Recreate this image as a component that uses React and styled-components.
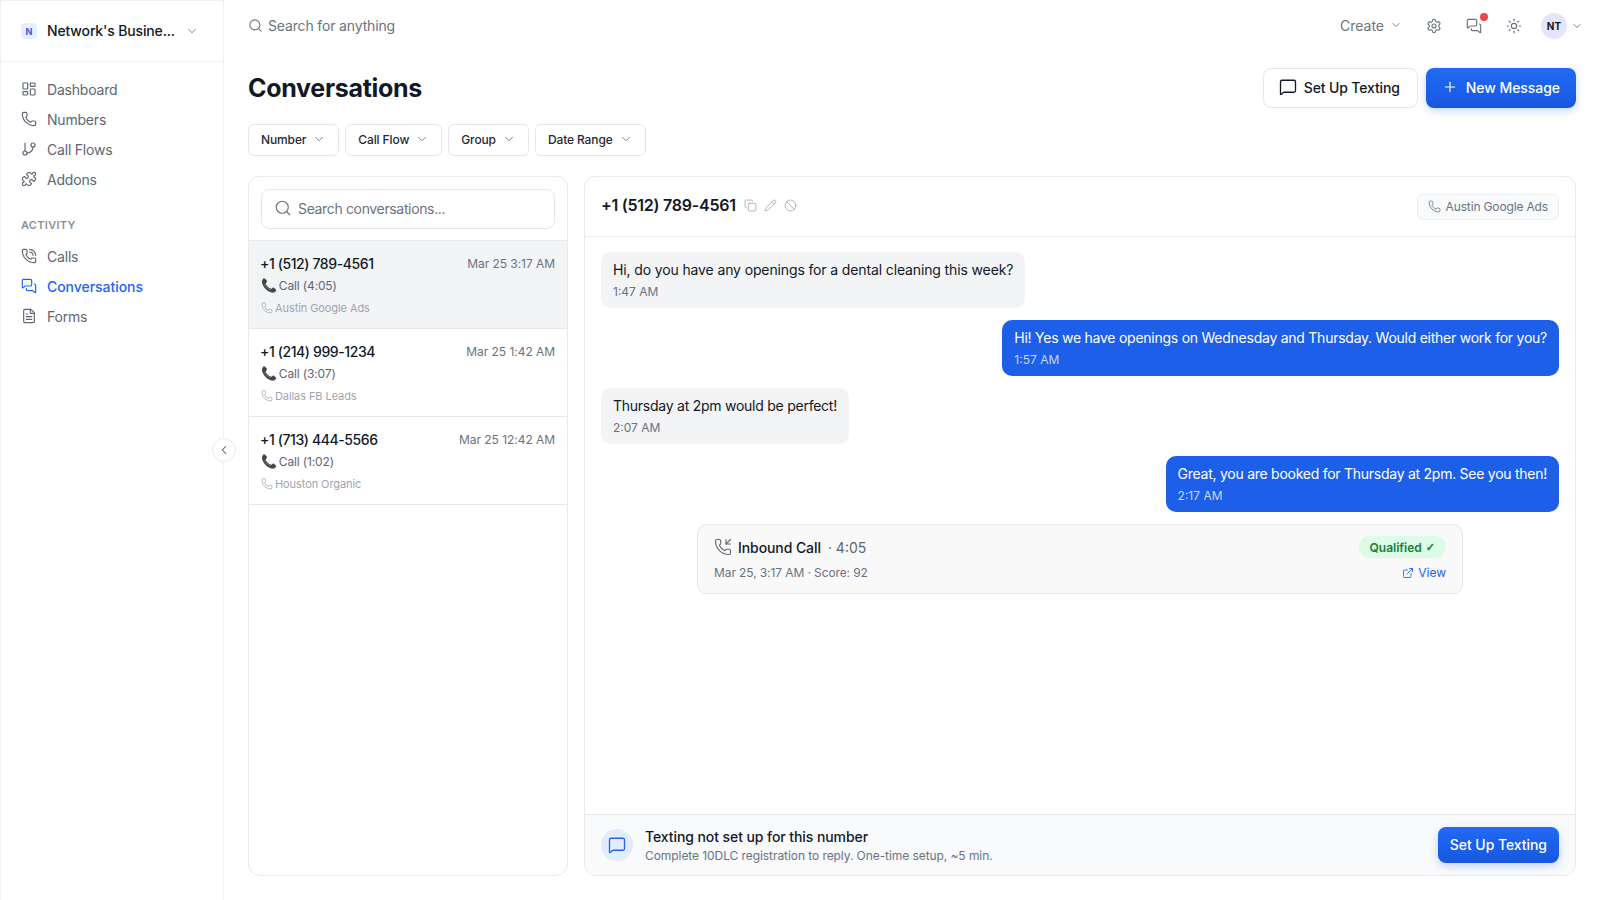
import React from "react";
import styled, { createGlobalStyle } from "styled-components";
import {
  LayoutDashboard,
  Phone,
  GitBranch,
  Puzzle,
  PhoneCall,
  MessagesSquare,
  FileText,
  ChevronDown,
  ChevronLeft,
  Search,
  Settings,
  Sun,
  MessageSquare,
  Plus,
  Copy,
  Pencil,
  Ban,
  PhoneIncoming,
  ExternalLink,
} from "lucide-react";

const GlobalStyle = createGlobalStyle`
  * { box-sizing: border-box; }
  html, body { margin: 0; padding: 0; height: 100%; background: #fff; }
  body {
    font-family: Inter, "Noto Sans", "Liberation Sans", sans-serif;
    color: #111827;
  }
`;

const Shell = styled.div`
  display: flex;
  height: 900px;
  overflow: hidden;
`;

const Sidebar = styled.aside`
  position: relative;
  width: 224px;
  flex: none;
  border: 1px solid #f1f2f4;
  border-bottom: none;
`;

const BusinessRow = styled.div`
  height: 61px;
  display: flex;
  align-items: center;
  padding: 0 20px;
  border-bottom: 1px solid #f1f2f4;
  color: #6b7280;
`;

const BusinessBadge = styled.div`
  width: 16px;
  height: 16px;
  border-radius: 4px;
  background: #e6efff;
  color: #2563eb;
  font-size: 9px;
  font-weight: 700;
  display: flex;
  align-items: center;
  justify-content: center;
  margin-right: 10px;
`;

const BusinessName = styled.div`
  width: 128px;
  padding-bottom: 1px;
  font-size: 14px;
  font-weight: 500;
  letter-spacing: -0.15px;
  color: #111827;
  white-space: nowrap;
`;

const Nav = styled.nav`
  padding: 12px 20px 0;
  display: flex;
  flex-direction: column;
`;

const NavItem = styled.div`
  height: 30px;
  display: flex;
  align-items: center;
  gap: 10px;
  font-size: 14px;
  letter-spacing: ${(props) => (props.active ? "-0.05px" : "-0.2px")};
  color: ${(props) => (props.active ? "#1d64f2" : "#5f6672")};
  font-weight: ${(props) => (props.active ? 500 : 400)};
`;

const NavHeading = styled.div`
  margin-top: 15px;
  height: 32px;
  display: flex;
  align-items: center;
  font-size: 11px;
  font-weight: 600;
  letter-spacing: 0.3px;
  color: #8a909b;
`;

const CollapseButton = styled.button`
  position: absolute;
  top: 437px;
  right: -13px;
  width: 24px;
  height: 24px;
  padding: 0;
  border-radius: 50%;
  border: 1px solid #e9eaee;
  background: #fff;
  color: #4b5563;
  display: flex;
  align-items: center;
  justify-content: center;
`;

const Main = styled.main`
  flex: 1;
  min-width: 0;
  padding: 0 24px 24px;
  display: flex;
  flex-direction: column;
`;

const Topbar = styled.header`
  height: 52px;
  margin-right: -7px;
  display: flex;
  align-items: center;
  color: #6b7280;
`;

const TopSearch = styled.div`
  flex: 1;
  display: flex;
  align-items: center;
  gap: 5px;
  padding-bottom: 2px;
  font-size: 14px;
  letter-spacing: -0.15px;
`;

const TopActions = styled.div`
  display: flex;
  align-items: center;
`;

const CreateMenu = styled.div`
  display: flex;
  align-items: center;
  gap: 6px;
  padding-bottom: 2px;
  font-size: 14px;
  margin-right: 24px;
`;

const IconSlot = styled.div`
  position: relative;
  display: flex;
  margin-right: 24px;
`;

const Dot = styled.span`
  position: absolute;
  top: -5px;
  right: -6px;
  width: 8px;
  height: 8px;
  border-radius: 50%;
  background: #ef4444;
`;

const Avatar = styled.div`
  width: 26px;
  height: 26px;
  border-radius: 50%;
  background: #e6e4f8;
  color: #111827;
  font-size: 10px;
  font-weight: 700;
  display: flex;
  align-items: center;
  justify-content: center;
  margin-right: 4px;
  margin-left: -5px;
`;

const TitleRow = styled.div`
  height: 40px;
  margin-top: 16px;
  display: flex;
  align-items: center;
  justify-content: space-between;
`;

const Title = styled.h1`
  margin: 0;
  font-size: 25px;
  font-weight: 700;
  letter-spacing: -0.3px;
  color: #111827;
`;

const TitleActions = styled.div`
  display: flex;
  gap: 8px;
`;

const OutlineButton = styled.button`
  height: 40px;
  padding: 0 17px 2px 15px;
  display: flex;
  align-items: center;
  gap: 7px;
  border: 1px solid #e5e7eb;
  border-radius: 8px;
  background: #fff;
  color: #111827;
  font: 500 14px Inter, sans-serif;
  letter-spacing: -0.15px;
`;

const PrimaryButton = styled.button`
  height: ${(props) => props.height || 40}px;
  padding: 0 ${(props) => props.pad || 16}px 2px;
  display: flex;
  align-items: center;
  gap: 8px;
  border: none;
  border-radius: 8px;
  background: linear-gradient(180deg, #2269f5, #1657e0);
  box-shadow: 0 3px 8px rgba(29, 100, 242, 0.25);
  color: #fff;
  font: 500 14px Inter, sans-serif;
  letter-spacing: -0.05px;
`;

const Filters = styled.div`
  margin-top: 16px;
  display: flex;
  gap: 6px;
`;

const FilterButton = styled.button`
  height: 32px;
  padding: 0 12px 2px;
  display: flex;
  align-items: center;
  gap: 6px;
  border: 1px solid #e5e7eb;
  border-radius: 6px;
  background: #fff;
  color: #1f2937;
  font: 500 12px Inter, sans-serif;
  letter-spacing: -0.12px;
`;

const Panels = styled.div`
  flex: 1;
  min-height: 0;
  margin-top: 20px;
  display: flex;
  gap: 16px;
`;

const ListPanel = styled.section`
  width: 320px;
  flex: none;
  border: 1px solid #e9eaee;
  border-radius: 12px;
  overflow: hidden;
`;

const ListSearchWrap = styled.div`
  height: 64px;
  padding: 12px 12px;
  border-bottom: 1px solid #e9eaee;
`;

const ListSearch = styled.div`
  height: 40px;
  display: flex;
  align-items: center;
  gap: 6px;
  padding: 0 12px 2px;
  border: 1px solid #e5e7eb;
  border-radius: 8px;
  color: #6b7280;
  font-size: 14px;
  letter-spacing: -0.35px;
`;

const Row = styled.div`
  height: 88px;
  padding: 13px 12px 0;
  border-bottom: 1px solid #e5e7eb;
  background: ${(props) => (props.selected ? "#f3f4f6" : "#fff")};
`;

const RowTop = styled.div`
  display: flex;
  justify-content: space-between;
  align-items: center;
  height: 18px;
`;

const RowNumber = styled.div`
  margin-left: -1px;
  font-size: 14px;
  font-weight: 500;
  letter-spacing: -0.4px;
  color: #111827;
`;

const RowDate = styled.div`
  font-size: 12px;
  letter-spacing: -0.05px;
  color: #6b7280;
`;

const RowCall = styled.div`
  margin-top: 5px;
  height: 17px;
  display: flex;
  align-items: center;
  gap: 2px;
  font-size: 12px;
  letter-spacing: -0.15px;
  color: #5f6672;
`;

const CallGlyph = styled.span`
  color: #374151;
  font-size: 13px;
  line-height: 1;
`;

const RowSource = styled.div`
  margin-top: 6px;
  height: 16px;
  display: flex;
  align-items: center;
  gap: 2px;
  font-size: 11px;
  letter-spacing: -0.08px;
  color: #a0a5af;
`;

const ChatPanel = styled.section`
  flex: 1;
  min-width: 0;
  border: 1px solid #e9eaee;
  border-radius: 12px;
  overflow: hidden;
  display: flex;
  flex-direction: column;
`;

const ChatHeader = styled.div`
  height: 60px;
  flex: none;
  padding: 0 16px;
  display: flex;
  align-items: center;
  justify-content: space-between;
  border-bottom: 1px solid #e9eaee;
`;

const ChatHeading = styled.div`
  display: flex;
  align-items: center;
  gap: 7px;
  padding-bottom: 3px;
  color: #a0a5af;
`;

const ChatNumber = styled.div`
  font-size: 16px;
  font-weight: 600;
  letter-spacing: -0.25px;
  color: #111827;
  margin-right: 1px;
`;

const SourceTag = styled.div`
  height: 26px;
  padding: 0 10px;
  display: flex;
  align-items: center;
  gap: 5px;
  border: 1px solid #eceef1;
  border-radius: 6px;
  background: #f9fafb;
  color: #6b7280;
  font-size: 12px;
  letter-spacing: -0.15px;
`;

const Thread = styled.div`
  flex: 1;
  min-height: 0;
  padding: 15px 16px;
  display: flex;
  flex-direction: column;
  gap: 12px;
`;

const Bubble = styled.div`
  align-self: ${(props) => (props.mine ? "flex-end" : "flex-start")};
  height: 56px;
  padding: 8px 12px;
  border-radius: 10px;
  background: ${(props) => (props.mine ? "#1d5fe8" : "#f3f4f6")};
  color: ${(props) => (props.mine ? "#fff" : "#111827")};
  font-size: 14px;
  line-height: 20px;
  letter-spacing: ${(props) => props.tracking}px;
`;

const BubbleTime = styled.div`
  margin-top: 4px;
  font-size: 12px;
  line-height: 16px;
  letter-spacing: 0;
  color: ${(props) => (props.mine ? "#c7d8fb" : "#6b7280")};
`;

const CallCard = styled.div`
  align-self: center;
  width: 766px;
  height: 70px;
  padding: 11px 16px;
  border: 1px solid #e5e7eb;
  border-radius: 10px;
  background: #f9f9fa;
  display: flex;
  justify-content: space-between;
`;

const CallInfo = styled.div`
  display: flex;
  flex-direction: column;
  gap: 7px;
`;

const CallTitle = styled.div`
  height: 22px;
  display: flex;
  align-items: center;
  gap: 6px;
  color: #5f6672;
  font-size: 14px;
`;

const CallName = styled.span`
  color: #111827;
  font-weight: 500;
  letter-spacing: -0.08px;
  margin-right: 1px;
`;

const CallMeta = styled.div`
  font-size: 12px;
  letter-spacing: -0.1px;
  color: #6b7280;
`;

const CallSide = styled.div`
  display: flex;
  flex-direction: column;
  align-items: flex-end;
  gap: 7px;
`;

const QualifiedPill = styled.div`
  height: 22px;
  padding: 0 11px;
  display: flex;
  align-items: center;
  gap: 4px;
  border-radius: 11px;
  background: #dcfce7;
  color: #15803d;
  font-size: 12px;
  font-weight: 600;
`;

const CheckGlyph = styled.span`
  font-family: "DejaVu Sans", sans-serif;
  font-size: 11px;
  -webkit-text-stroke: 0.5px #15803d;
`;

const ViewLink = styled.a`
  display: flex;
  align-items: center;
  gap: 4px;
  color: #2563eb;
  font-size: 12px;
`;

const Notice = styled.div`
  height: 61px;
  flex: none;
  padding: 0 16px;
  display: flex;
  align-items: center;
  border-top: 1px solid #e5e7eb;
  background: #f9fafb;
`;

const NoticeIcon = styled.div`
  width: 32px;
  height: 32px;
  border-radius: 50%;
  background: #e3ecfc;
  color: #1d64f2;
  display: flex;
  align-items: center;
  justify-content: center;
  margin-right: 12px;
`;

const NoticeText = styled.div`
  flex: 1;
  padding-top: 2px;
`;

const NoticeTitle = styled.div`
  font-size: 14px;
  font-weight: 500;
  line-height: 18px;
  letter-spacing: -0.08px;
  color: #111827;
`;

const NoticeSub = styled.div`
  margin-top: 2px;
  font-size: 12px;
  line-height: 16px;
  letter-spacing: -0.07px;
  color: #6b7280;
`;

const mainNav = [
  { label: "Dashboard", icon: LayoutDashboard },
  { label: "Numbers", icon: Phone },
  { label: "Call Flows", icon: GitBranch },
  { label: "Addons", icon: Puzzle },
];

const activityNav = [
  { label: "Calls", icon: PhoneCall },
  { label: "Conversations", icon: MessagesSquare, active: true },
  { label: "Forms", icon: FileText },
];

const filters = ["Number", "Call Flow", "Group", "Date Range"];

const conversations = [
  { number: "+1 (512) 789-4561", date: "Mar 25 3:17 AM", call: "Call (4:05)", source: "Austin Google Ads", selected: true },
  { number: "+1 (214) 999-1234", date: "Mar 25 1:42 AM", call: "Call (3:07)", source: "Dallas FB Leads" },
  { number: "+1 (713) 444-5566", date: "Mar 25 12:42 AM", call: "Call (1:02)", source: "Houston Organic" },
];

const messages = [
  { text: "Hi, do you have any openings for a dental cleaning this week?", time: "1:47 AM", tracking: -0.13 },
  { text: "Hi! Yes we have openings on Wednesday and Thursday. Would either work for you?", time: "1:57 AM", mine: true, tracking: -0.25 },
  { text: "Thursday at 2pm would be perfect!", time: "2:07 AM", tracking: -0.25 },
  { text: "Great, you are booked for Thursday at 2pm. See you then!", time: "2:17 AM", mine: true, tracking: -0.26 },
];

function NavList({ items }) {
  return items.map((item) => {
    const Icon = item.icon;
    return (
      <NavItem key={item.label} active={item.active}>
        <Icon size={16} strokeWidth={1.75} />
        {item.label}
      </NavItem>
    );
  });
}

export default function App() {
  return (
    <Shell>
      <GlobalStyle />
      <Sidebar>
        <BusinessRow>
          <BusinessBadge>N</BusinessBadge>
          <BusinessName>Network's Busine...</BusinessName>
          <ChevronDown size={14} strokeWidth={1.5} style={{ marginLeft: 10 }} />
        </BusinessRow>
        <Nav>
          <NavList items={mainNav} />
          <NavHeading>ACTIVITY</NavHeading>
          <NavList items={activityNav} />
        </Nav>
        <CollapseButton>
          <ChevronLeft size={14} strokeWidth={1.75} />
        </CollapseButton>
      </Sidebar>

      <Main>
        <Topbar>
          <TopSearch>
            <Search size={15} strokeWidth={1.75} />
            Search for anything
          </TopSearch>
          <TopActions>
            <CreateMenu>
              Create
              <ChevronDown size={12} strokeWidth={1.75} />
            </CreateMenu>
            <IconSlot>
              <Settings size={16} strokeWidth={1.75} />
            </IconSlot>
            <IconSlot>
              <MessagesSquare size={16} strokeWidth={1.75} />
              <Dot />
            </IconSlot>
            <IconSlot>
              <Sun size={16} strokeWidth={1.75} />
            </IconSlot>
            <Avatar>NT</Avatar>
            <ChevronDown size={12} strokeWidth={1.75} />
          </TopActions>
        </Topbar>

        <TitleRow>
          <Title>Conversations</Title>
          <TitleActions>
            <OutlineButton>
              <MessageSquare size={18} strokeWidth={1.75} />
              Set Up Texting
            </OutlineButton>
            <PrimaryButton>
              <Plus size={16} strokeWidth={1.75} />
              New Message
            </PrimaryButton>
          </TitleActions>
        </TitleRow>

        <Filters>
          {filters.map((name) => (
            <FilterButton key={name}>
              {name}
              <ChevronDown size={14} strokeWidth={1.5} color="#6b7280" />
            </FilterButton>
          ))}
        </Filters>

        <Panels>
          <ListPanel>
            <ListSearchWrap>
              <ListSearch>
                <Search size={18} strokeWidth={1.5} />
                Search conversations...
              </ListSearch>
            </ListSearchWrap>
            {conversations.map((item) => (
              <Row key={item.number} selected={item.selected}>
                <RowTop>
                  <RowNumber>{item.number}</RowNumber>
                  <RowDate>{item.date}</RowDate>
                </RowTop>
                <RowCall>
                  <CallGlyph>📞</CallGlyph>
                  {item.call}
                </RowCall>
                <RowSource>
                  <Phone size={12} strokeWidth={1.5} />
                  {item.source}
                </RowSource>
              </Row>
            ))}
          </ListPanel>

          <ChatPanel>
            <ChatHeader>
              <ChatHeading>
                <ChatNumber>+1 (512) 789-4561</ChatNumber>
                <Copy size={13} strokeWidth={1.5} />
                <Pencil size={13} strokeWidth={1.5} />
                <Ban size={13} strokeWidth={1.5} />
              </ChatHeading>
              <SourceTag>
                <Phone size={13} strokeWidth={1.5} />
                Austin Google Ads
              </SourceTag>
            </ChatHeader>

            <Thread>
              {messages.map((msg) => (
                <Bubble key={msg.time} mine={msg.mine} tracking={msg.tracking}>
                  {msg.text}
                  <BubbleTime mine={msg.mine}>{msg.time}</BubbleTime>
                </Bubble>
              ))}
              <CallCard>
                <CallInfo>
                  <CallTitle>
                    <PhoneIncoming size={18} strokeWidth={1.5} />
                    <CallName>Inbound Call</CallName>
                    <span>· 4:05</span>
                  </CallTitle>
                  <CallMeta>Mar 25, 3:17 AM · Score: 92</CallMeta>
                </CallInfo>
                <CallSide>
                  <QualifiedPill>
                    Qualified
                    <CheckGlyph>✓</CheckGlyph>
                  </QualifiedPill>
                  <ViewLink>
                    <ExternalLink size={12} strokeWidth={1.75} />
                    View
                  </ViewLink>
                </CallSide>
              </CallCard>
            </Thread>

            <Notice>
              <NoticeIcon>
                <MessageSquare size={18} strokeWidth={1.75} />
              </NoticeIcon>
              <NoticeText>
                <NoticeTitle>Texting not set up for this number</NoticeTitle>
                <NoticeSub>Complete 10DLC registration to reply. One-time setup, ~5 min.</NoticeSub>
              </NoticeText>
              <PrimaryButton height={36} pad={12}>Set Up Texting</PrimaryButton>
            </Notice>
          </ChatPanel>
        </Panels>
      </Main>
    </Shell>
  );
}
